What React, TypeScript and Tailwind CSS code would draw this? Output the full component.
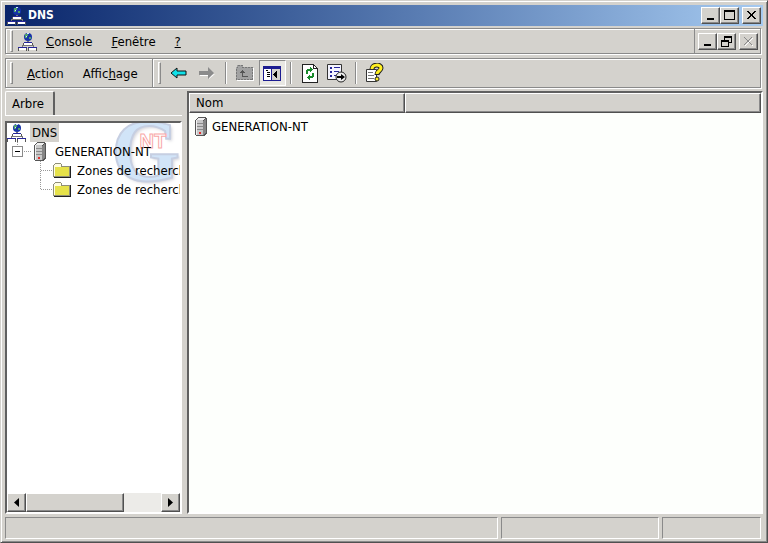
import type { ReactNode } from 'react';

const raised = 'bg-[#d4d2cd] border border-t-white border-l-white border-r-[#505050] border-b-[#505050] shadow-[inset_-1px_-1px_0_#8a8a8a]';
const sunken = 'border-2 border-t-[#606060] border-l-[#606060] border-r-white border-b-white';
const etched = 'border border-[#8a8a8a] shadow-[1px_1px_0_#fff,inset_1px_1px_0_#fff]';
const pane = 'border border-t-[#8a8a8a] border-l-[#8a8a8a] border-r-white border-b-white';

function DnsIcon() {
    return (
        <svg width="19" height="19" viewBox="0 0 19 19" shapeRendering="crispEdges" className="shrink-0">
            <circle cx="10" cy="5" r="4" fill="#1733a8" shapeRendering="auto" />
            <path d="M7 2h3v2H9v2H7zM11 5h2v2h-2z" fill="#4fa36b" />
            <path d="M9 1h2v1H9zM8 4h1v1H8z" fill="#cfe6ff" />
            <path d="M9 9h2v1H9zM4 13h12v1H4zM4 14h1v1H4zM15 14h1v1h-1z" fill="#777" />
            <path d="M6 10h8v3H6zM1 15h8v3H1zM11 15h7v3h-7z" fill="#fff" />
            <path d="M6 10h8v1H6zM0 15h9v1H0zM10 15h9v1h-9z" fill="#26269a" />
            <path d="M5 11h1v2H5zM14 11h1v2h-1zM0 16h1v3H0zM8 16h1v3H8zM10 16h1v3h-1zM18 16h1v3h-1z" fill="#555" />
        </svg>
    );
}

function ServerIcon() {
    return (
        <svg width="14" height="19" viewBox="0 0 14 19" shapeRendering="crispEdges" className="shrink-0">
            <path d="M4 0h7l2 2v14l-3 3H2l-1-1V3z" fill="#555" />
            <path d="M4 1h7L9 3H2z" fill="#f0f0f0" />
            <path d="M2 3h7v15H2z" fill="#c8c8c8" />
            <path d="M2 3h1v15H2z" fill="#f2f2f2" />
            <path d="M9 4l3-3v15l-3 2z" fill="#858585" />
            <path d="M3 6h6v1H3zM3 9h6v1H3zM3 12h6v1H3z" fill="#8a8a8a" />
            <path d="M5 15h2v2H5z" fill="#e03030" />
        </svg>
    );
}

function FolderIcon() {
    return (
        <svg width="19" height="17" viewBox="0 0 19 17" shapeRendering="crispEdges" className="shrink-0">
            <path d="M0 3h1V2h1V1h6v1h1v2h8v11H0z" fill="#8f8f78" />
            <path d="M1 3h1V2h6v3h8v9H1z" fill="#fffde0" />
            <path d="M2 5h14v9H2z" fill="#e6e24a" />
            <path d="M17 4h1v12H1v-1h16z" fill="#222" />
        </svg>
    );
}

function TitleButton({ label, disabled, children }: { label: string; disabled?: boolean; children: ReactNode }) {
    return (
        <button type="button" aria-label={label} disabled={disabled} className={`flex h-[17px] w-[19px] items-center justify-center ${raised}`}>
            <svg width="13" height="13" viewBox="0 0 13 13" className="shrink-0" shapeRendering="crispEdges">{children}</svg>
        </button>
    );
}

function ScrollButton({ label, d }: { label: string; d: string }) {
    return (
        <button type="button" aria-label={label} className={`flex w-[19px] shrink-0 items-center justify-center ${raised}`}>
            <svg width="5" height="9" viewBox="0 0 5 9"><path d={d} /></svg>
        </button>
    );
}

function Grip() {
    return <div className="h-[22px] w-[3px] shrink-0 border border-t-white border-l-white border-r-[#8a8a8a] border-b-[#8a8a8a]" />;
}

function Separator() {
    return <div className="h-[22px] w-[2px] shrink-0 border-r border-l border-r-white border-l-[#8a8a8a]" />;
}

function ZoneItem({ name, last }: { name: string; last?: boolean }) {
    return (
        <li role="treeitem" className="flex h-[19px] items-center pl-[33px]">
            <svg width="13" height="19" viewBox="0 0 13 19" shapeRendering="crispEdges" className="shrink-0">
                <path d={last ? 'M.5 0v10M1 9.5h12' : 'M.5 0v19M1 9.5h12'} fill="none" stroke="#999" strokeDasharray="1 1" />
            </svg>
            <FolderIcon />
            <span className="ml-[5px]">{name}</span>
        </li>
    );
}

export default function App() {
    return (
        <div className="flex min-h-screen flex-col border border-[#d4d2cd] border-r-[#505050] border-b-[#505050] bg-[#d4d2cd] px-1 pt-1 pb-[3px] font-['DejaVu_Sans_Condensed','DejaVu_Sans',sans-serif] text-[13px] leading-[19px] text-black shadow-[inset_1px_1px_0_#fff,inset_-1px_-1px_0_#8a8a8a]">
            {/* Title bar */}
            <header className="flex h-[21px] shrink-0 items-center bg-linear-to-r from-[#0a246a] to-[#a6caf0] px-[2px]">
                <DnsIcon />
                <h1 className="grow pl-[2px] text-[12px] font-bold text-white">DNS</h1>
                <TitleButton label="Réduire"><path d="M3 9h7v2H3z" /></TitleButton>
                <TitleButton label="Agrandir"><path d="M1 1h11v10H1zM2 3v7h9V3z" fillRule="evenodd" /></TitleButton>
                <div className="w-[3px]" />
                <TitleButton label="Fermer"><path d="M2 2h2v1h1v1h1v1h1V4h1V3h1V2h2v1h-1v1H9v1H8v2h1v1h1v1h1v1H9V9H8V8H7V7H6v1H5v1H4v1H2V9h1V8h1V7h1V5H4V4H3V3H2z" /></TitleButton>
            </header>

            {/* Menu bar */}
            <nav className={`mt-[2px] mr-[2px] flex h-[26px] shrink-0 items-center pl-1 ${etched}`}>
                <Grip />
                <div className="w-[5px]" />
                <DnsIcon />
                <button type="button" className="ml-[9px]"><u>C</u>onsole</button>
                <button type="button" className="ml-[19px]"><u>F</u>enêtre</button>
                <button type="button" className="ml-[19px]"><u>?</u></button>
                <div className="grow" />
                <div className="flex h-full items-center border-l border-[#8a8a8a] pr-[2px] pl-[3px]">
                    <TitleButton label="Réduire la console"><path d="M3 9h7v2H3z" /></TitleButton>
                    <TitleButton label="Restaurer la console"><path d="M4 1h8v7H9v4H1V5h3zM5 3v2h4v2h2V3zM2 7v4h6V7z" fillRule="evenodd" /></TitleButton>
                    <div className="w-[3px]" />
                    <TitleButton label="Fermer la console" disabled>
                        <path d="M3 3l8 8M11 3l-8 8" stroke="#fff" />
                        <path d="M2 2l8 8M10 2l-8 8" stroke="#8a8a8a" />
                    </TitleButton>
                </div>
            </nav>

            {/* Toolbar */}
            <div role="toolbar" className={`mt-1 mr-[2px] flex h-[30px] shrink-0 items-center pl-1 ${etched}`}>
                <Grip />
                <button type="button" className="ml-[14px]"><u>A</u>ction</button>
                <button type="button" className="ml-[19px]">Affic<u>h</u>age</button>
                <div className="w-[14px]" />
                <div className="h-full w-[2px] border-r border-l border-r-white border-l-[#8a8a8a]" />
                <div className="w-1" />
                <Grip />
                <button type="button" aria-label="Précédent" className="ml-[9px]">
                    <svg width="17" height="14" viewBox="0 0 17 14"><path d="M1 7l6-5v3h9v4H7v3z" fill="#10e0e8" stroke="#111" /></svg>
                </button>
                <button type="button" aria-label="Suivant" disabled className="mr-[10px] ml-[11px]">
                    <svg width="17" height="14" viewBox="0 0 17 14">
                        <path d="M17 8l-6 5v-3H2v-1h9z" fill="#fff" />
                        <path d="M16 7l-6-6v4H1v4h9v4z" fill="#8b8b8b" />
                    </svg>
                </button>
                <Separator />
                <button type="button" aria-label="Dossier parent" disabled className="mr-1 ml-2">
                    <svg width="20" height="18" viewBox="0 0 20 18" shapeRendering="crispEdges">
                        <path d="M2 4h1V2h5v2h11v13H2z" fill="#fff" />
                        <path d="M1 3h1V1h6v2h10v13H1z" fill="#a2a2a2" />
                        <path d="M1.5 3.5h1v-2h5v2h10v12h-16z" fill="none" stroke="#777" strokeDasharray="2 1" />
                        <path d="M7 6h1v1h1v1h1v1H8v3h5v1H7V9H5V8h1V7h1z" fill="#555" />
                    </svg>
                </button>
                <button type="button" aria-label="Arborescence" aria-pressed="true" className="flex h-[26px] w-[27px] items-center justify-center border border-t-[#8a8a8a] border-r-white border-b-white border-l-[#8a8a8a] bg-[#e8e7e3]">
                    <svg width="18" height="16" viewBox="0 0 18 16" shapeRendering="crispEdges">
                        <path d="M0 1h18v15H0z" fill="#1c1c91" />
                        <path d="M1 4h7v11H1z" fill="#fff" />
                        <path d="M9 4h8v11H9z" fill="#d4d2cd" />
                        <path d="M3 5h2v1H3zM4 7h3v1H4zM4 9h3v1H4zM4 11h3v1H4zM14 6v7h-1v-1h-1v-1h-1v-1h-1V9h1V8h1V7h1V6z" />
                    </svg>
                </button>
                <div className="w-1" />
                <Separator />
                <button type="button" aria-label="Actualiser" className="ml-[10px]">
                    <svg width="16" height="19" viewBox="0 0 16 19" shapeRendering="crispEdges">
                        <path d="M.5.5h11l4 4v14H.5z" fill="#fff" stroke="#222" />
                        <path d="M11.5 1v3.5h4" fill="none" stroke="#222" />
                        <path d="M4 10V6h1V5h3V3h1v1h1v1h1v1h-1v1H9v1H8V7H6v3zM12 9v4h-1v1H8v2H7v-1H6v-1H5v-1h1v-1h1v-1h1v1h2V9z" fill="#198a2b" />
                    </svg>
                </button>
                <button type="button" aria-label="Exporter la liste" className="ml-[9px]">
                    <svg width="20" height="20" viewBox="0 0 20 20">
                        <path d="M.5 1.5h14v15H.5z" fill="#f4f4ff" stroke="#333" />
                        <path d="M3 4h2v2H3zM7 4h6v1H7zM3 8h2v2H3zM7 8h5v1H7zM3 12h2v2H3zM7 12h2v1H7z" fill="#26269a" />
                        <circle cx="14" cy="14" r="5" fill="#eee" stroke="#222" />
                        <path d="M10 13h4v-2l4 3-4 3v-2h-4z" />
                    </svg>
                </button>
                <div className="w-2" />
                <Separator />
                <button type="button" aria-label="Aide" className="ml-2">
                    <svg width="19" height="20" viewBox="0 0 19 20">
                        <path d="M1.5 6.5h10v12h-10z" fill="#fff" stroke="#333" />
                        <path d="M3 9.5h5M3 12.5h6M3 15.5h6" stroke="#777" />
                        <path d="M7 6c0-5 9-5 9-1 0 3-4 3-4 7" fill="none" stroke="#222" strokeWidth="5" />
                        <path d="M7 6c0-5 9-5 9-1 0 3-4 3-4 6" fill="none" stroke="#ffef20" strokeWidth="3" />
                        <circle cx="12" cy="16" r="2" fill="#ffef20" stroke="#222" />
                    </svg>
                </button>
            </div>

            <main className="mt-[3px] flex grow gap-[5px]">
                {/* Console tree */}
                <section className="flex w-[177px] shrink-0 flex-col">
                    <div role="tablist" className="flex h-[25px] shrink-0 items-end border-b border-white">
                        <button type="button" role="tab" aria-selected="true" className="h-6 w-[50px] rounded-t-[2px] border-t border-r-2 border-l border-t-white border-r-[#606060] border-l-white pr-[3px] text-center">Arbre</button>
                    </div>
                    <div className={`mt-[5px] flex grow flex-col bg-white ${sunken}`}>
                        <div className="relative grow overflow-hidden">
                            {/* Watermark */}
                            <div aria-hidden="true" className="pointer-events-none absolute -top-1 right-0 font-['Liberation_Serif',serif] font-bold opacity-40">
                                <div className="text-[88px] leading-[64px] text-[#8fbdf0] [-webkit-text-stroke:2px_#7388b8] [text-shadow:2px_2px_3px_#99a]">G</div>
                                <div className="absolute top-3 left-7 font-['Liberation_Sans',sans-serif] text-[20px] leading-5 text-white [-webkit-text-stroke:1px_#f02020]">NT</div>
                            </div>
                            <ul role="tree" className="relative whitespace-nowrap">
                                <li role="treeitem" className="flex h-[19px] items-center"><DnsIcon /><span className="ml-1 bg-[#d4d2cd] px-[2px]">DNS</span></li>
                                <li role="treeitem" aria-expanded="true" className="flex h-[19px] items-center pl-[5px]">
                                    <svg width="21" height="19" viewBox="0 0 21 19" shapeRendering="crispEdges" className="shrink-0">
                                        <path d="M5.5 0v4M12 9.5h8" stroke="#999" strokeDasharray="1 1" />
                                        <path d="M.5 4.5h10v10H.5z" fill="#fff" stroke="#8a8a8a" />
                                        <path d="M3 9h5v1H3z" />
                                    </svg>
                                    <ServerIcon />
                                    <span className="ml-2">GENERATION-NT</span>
                                </li>
                                <ZoneItem name="Zones de recherche" />
                                <ZoneItem name="Zones de recherche" last />
                            </ul>
                        </div>
                        <div className="flex h-[19px] shrink-0 bg-[#ecebe8]">
                            <ScrollButton label="Défiler à gauche" d="M5 0v9L0 4.5z" />
                            <div className={`w-[98px] ${raised}`} />
                            <div className="grow" />
                            <ScrollButton label="Défiler à droite" d="M0 0v9l5-4.5z" />
                        </div>
                    </div>
                </section>

                {/* Details */}
                <section className={`grow bg-[#fdfffc] ${sunken}`}>
                    <table className="w-full border-separate border-spacing-0 text-left">
                        <thead>
                            <tr>
                                <th className={`h-5 w-[216px] p-0 pl-[6px] leading-[18px] font-normal ${raised}`}>Nom</th>
                                <td className={`p-0 ${raised}`} />
                            </tr>
                        </thead>
                        <tbody>
                            <tr>
                                <td className="p-0 pt-1 pl-[5px]">
                                    <div className="flex items-center gap-1"><ServerIcon />GENERATION-NT</div>
                                </td>
                                <td />
                            </tr>
                        </tbody>
                    </table>
                </section>
            </main>

            {/* Status bar */}
            <footer className="mt-[3px] mr-[2px] flex h-[22px] shrink-0 gap-[3px]">
                <div className={`grow ${pane}`} />
                <div className={`w-[158px] ${pane}`} />
                <div className={`w-[99px] ${pane}`} />
            </footer>
        </div>
    );
}
